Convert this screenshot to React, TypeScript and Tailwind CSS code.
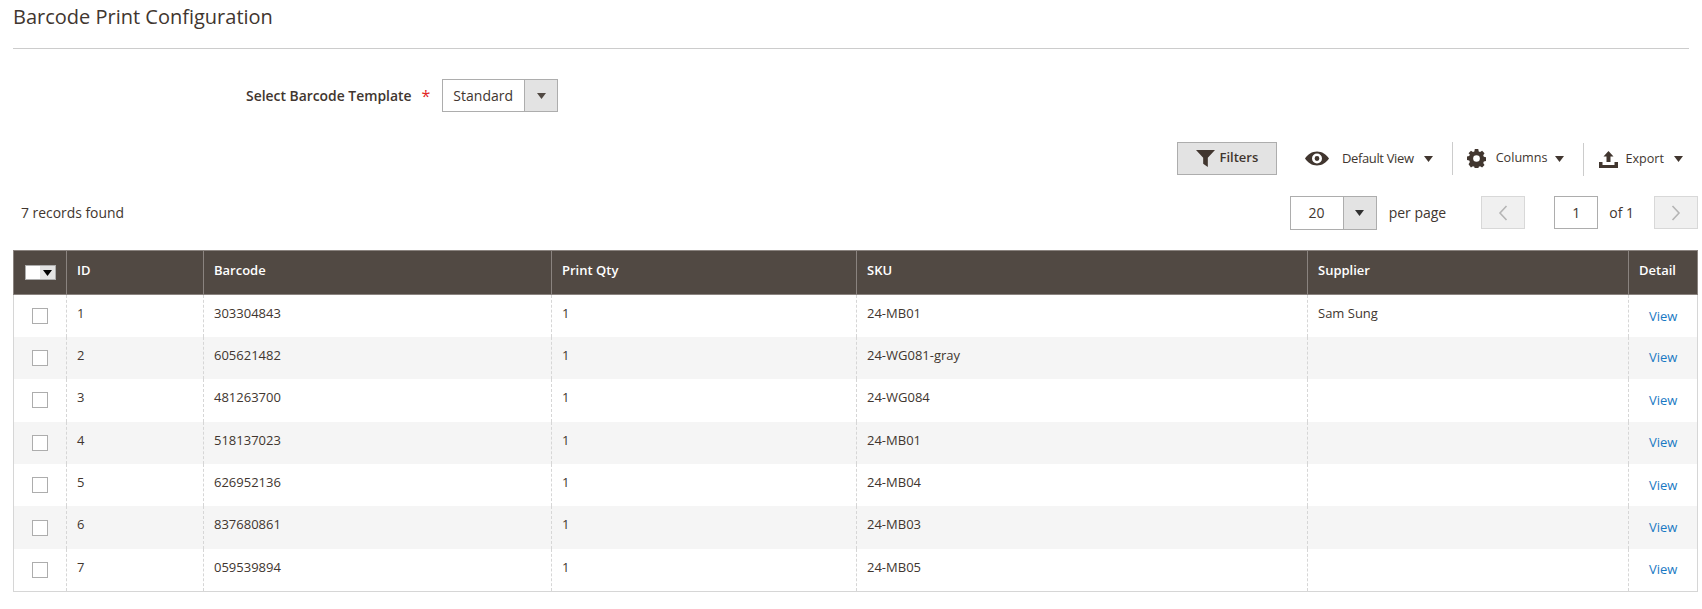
import { useState } from "react";

const rows = [
  { id: 1, barcode: "303304843", sku: "24-MB01", supplier: "Sam Sung" },
  { id: 2, barcode: "605621482", sku: "24-WG081-gray", supplier: "" },
  { id: 3, barcode: "481263700", sku: "24-WG084", supplier: "" },
  { id: 4, barcode: "518137023", sku: "24-MB01", supplier: "" },
  { id: 5, barcode: "626952136", sku: "24-MB04", supplier: "" },
  { id: 6, barcode: "837680861", sku: "24-MB03", supplier: "" },
  { id: 7, barcode: "059539894", sku: "24-MB05", supplier: "" },
];

function Caret({ className = "" }: { className?: string }) {
  return (
    <svg width="9" height="6" viewBox="0 0 9 6" className={className}>
      <path d="M0 0h9L4.5 6z" fill="currentColor" />
    </svg>
  );
}

function Funnel() {
  return (
    <svg width="19" height="17" viewBox="0 0 18 16">
      <path d="M0 0h18l-6.8 7.4V16l-4.4-3V7.4z" fill="#41362f" />
    </svg>
  );
}

function Eye() {
  return (
    <svg width="24" height="15" viewBox="0 0 24 14">
      <path
        fillRule="evenodd"
        d="M12 0c5 0 9.300 2.800 12 7-2.700 4.200-7 7-12 7S2.700 11.200 0 7c2.700-4.200 7-7 12-7zm0 2a5 5 0 100 10 5 5 0 000-10zm0 2.600a2.400 2.400 0 110 4.800 2.400 2.400 0 010-4.800z"
        fill="#41362f"
      />
    </svg>
  );
}

function Gear() {
  return (
    <svg width="19" height="19" viewBox="0 0 24 24">
      <path
        fillRule="evenodd"
        d="M9.500 0h5l.7 3.400 2 .8L20.100 2.300l3.500 3.500-1.900 2.900.9 2 3.400.7v5l-3.400.7-.9 2 1.900 2.900-3.500 3.500-2.900-1.900-2 .8-.7 3.400h-5l-.7-3.400-2-.8-2.900 1.900L.4 20.800l1.900-2.900-.9-2L-2 15.200v-5l3.400-.7.9-2L.4 5.800l3.500-3.500 2.900 1.900 2-.8z"
        transform="translate(1.600 0) scale(.87 .92)"
        fill="#41362f"
      />
      <circle cx="12" cy="12" r="4.200" fill="#fff" />
    </svg>
  );
}

function Upload() {
  return (
    <svg width="19" height="17" viewBox="0 0 19 17">
      <path d="M9.500 0l5 5.500h-3v5.500h-4V5.500h-3z" fill="#41362f" />
      <path d="M0 11h3.500v3h12v-3H19v6H0z" fill="#41362f" />
    </svg>
  );
}

function ToolbarDivider() {
  return <div className="h-[33px] w-px bg-[#cccccc]" />;
}

export default function App() {
  const [perPage] = useState(20);

  return (
    <div className="min-h-[609px] bg-white text-[#41362f] [font-family:'Open_Sans',sans-serif] text-[13px]">
      <div className="mx-[13px] flex h-[49px] items-start border-b border-[#cccccc] pt-[3px]">
        <h1 className="text-[20px] leading-[28px] font-normal">Barcode Print Configuration</h1>
      </div>

      <div className="mt-[30px] flex h-[33px] items-center pl-[246px]">
        <label className="pt-[1px] font-semibold text-[13.9px]">Select Barcode Template</label>
        <span className="ml-[10px] mr-[12px] text-[16px] leading-none text-[#e22626]">*</span>
        <div className="flex h-[33px] w-[116px] border border-[#adadad]">
          <div className="flex flex-1 items-center pl-[10px] text-[14px]">Standard</div>
          <div className="flex w-[33px] items-center justify-center border-l border-[#adadad] bg-[#e3e3e3]">
            <Caret className="text-[#514943]" />
          </div>
        </div>
      </div>

      <div className="mt-[29px] flex h-[35px] items-center justify-end pr-[19px]">
        <button className="mr-[28px] flex h-[33px] w-[100px] items-center justify-center gap-[5px] border border-[#adadad] bg-[#e3e3e3] pb-[1px] font-semibold">
          <Funnel />
          Filters
        </button>
        <Eye />
        <span className="ml-[13px] tracking-[-0.35px]">Default View</span>
        <Caret className="ml-[10px] mr-[19px] text-[#41362f]" />
        <ToolbarDivider />
        <span className="ml-[14px]"><Gear /></span>
        <span className="ml-[10px] text-[12.6px]">Columns</span>
        <Caret className="ml-[8px] mr-[19px] text-[#41362f]" />
        <div className="mt-[2px]"><ToolbarDivider /></div>
        <span className="ml-[15px] mt-[1px]"><Upload /></span>
        <span className="ml-[7px] mt-[1px] text-[12.6px]">Export</span>
        <Caret className="ml-[10px] mt-[1px] text-[#41362f]" />
      </div>

      <div className="mt-[19px] flex h-[35px] items-center pr-[4px]">
        <div className="ml-[21px] pt-[1px] text-[13.9px]">7 records found</div>
        <div className="ml-auto flex h-[34px] w-[87px] border border-[#adadad]">
          <div className="flex flex-1 items-center justify-center text-[14px]">{perPage}</div>
          <div className="flex w-[33px] items-center justify-center border-l border-[#adadad] bg-[#e3e3e3]">
            <Caret className="text-[#303030]" />
          </div>
        </div>
        <span className="ml-[12px] text-[14px]">per page</span>
        <button className="ml-[35px] flex h-[33px] w-[44px] items-center justify-center border border-[#d8d8d8] bg-[#f0f0f0]">
          <svg width="10" height="16" viewBox="0 0 10 16"><path d="M8.500 1L2 8l6.500 7" fill="none" stroke="#b5b5b5" strokeWidth="1.600" /></svg>
        </button>
        <div className="ml-[29px] flex h-[33px] w-[44px] items-center justify-center border border-[#adadad] text-[14px]">1</div>
        <span className="ml-[11px] text-[14px]">of 1</span>
        <button className="ml-[20px] flex h-[33px] w-[44px] items-center justify-center border border-[#d8d8d8] bg-[#f0f0f0]">
          <svg width="10" height="16" viewBox="0 0 10 16"><path d="M1.500 1L8 8l-6.500 7" fill="none" stroke="#b5b5b5" strokeWidth="1.600" /></svg>
        </button>
      </div>

      <div className="mx-[13px] mt-[20px] w-[1685px]">
        <table className="w-full table-fixed border-collapse">
          <colgroup>
            <col className="w-[53px]" />
            <col className="w-[137px]" />
            <col className="w-[348px]" />
            <col className="w-[305px]" />
            <col className="w-[451px]" />
            <col className="w-[321px]" />
            <col />
          </colgroup>
          <thead>
            <tr className="h-[44px] bg-[#514943] text-left text-white">
              <th className="border border-[#8a837f] p-0">
                <div className="ml-[11px] flex h-[15px] w-[31px] border border-[#adadad]">
                  <div className="flex-1 bg-white" />
                  <div className="flex w-[15px] items-center justify-center bg-[#e3e3e3]">
                    <Caret className="text-black" />
                  </div>
                </div>
              </th>
              {["ID", "Barcode", "Print Qty", "SKU", "Supplier", "Detail"].map((h) => (
                <th key={h} className="border border-[#8a837f] px-[10px] pb-[4px] font-semibold">{h}</th>
              ))}
            </tr>
          </thead>
          <tbody className="border border-[#d6d6d6]">
            {rows.map((r, i) => (
              <tr key={r.id} className={i % 2 ? "h-[42.4px] bg-[#f5f5f5]" : "h-[42.4px] bg-white"}>
                <td className="border-r border-dashed border-[#d6d6d6] p-0">
                  <div className="ml-[18px] h-[16px] w-[16px] border border-[#adadad] bg-white" />
                </td>
                <td className="border-r border-dashed border-[#d6d6d6] px-[10px] align-top pt-[9px]">{r.id}</td>
                <td className="border-r border-dashed border-[#d6d6d6] px-[10px] align-top pt-[9px]">{r.barcode}</td>
                <td className="border-r border-dashed border-[#d6d6d6] px-[10px] align-top pt-[9px]">1</td>
                <td className="border-r border-dashed border-[#d6d6d6] px-[10px] align-top pt-[9px]">{r.sku}</td>
                <td className="border-r border-dashed border-[#d6d6d6] px-[10px] align-top pt-[9px]">{r.supplier}</td>
                <td className="pl-[20px] align-top pt-[11.5px] text-[#1979c3]">View</td>
              </tr>
            ))}
          </tbody>
        </table>
      </div>
    </div>
  );
}
